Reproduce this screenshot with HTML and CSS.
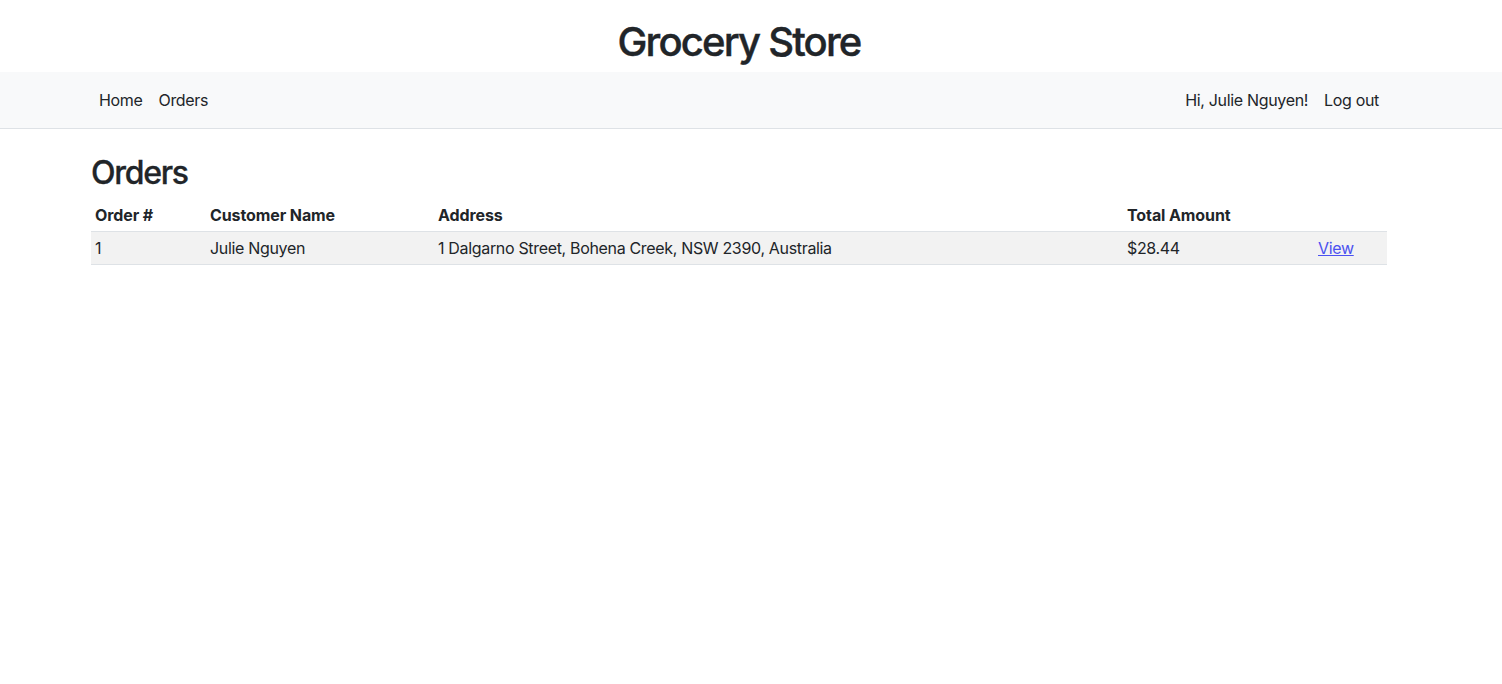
FILE: index.html
```html
<!DOCTYPE html>
<html lang="en">
<head>
<meta charset="utf-8">
<title>Grocery Store</title>
<link rel="stylesheet" href="styles.css">
</head>
<body>
  <header class="container site-header">
    <h1 class="site-title">Grocery Store</h1>
  </header>
  <nav class="navbar">
    <div class="container nav-inner">
      <ul class="nav">
        <li><a class="nav-link" href="#">Home</a></li>
        <li><a class="nav-link" href="#">Orders</a></li>
      </ul>
      <ul class="nav">
        <li><span class="nav-link">Hi, Julie Nguyen!</span></li>
        <li><a class="nav-link" href="#">Log out</a></li>
      </ul>
    </div>
  </nav>
  <main class="container main">
    <h2 class="page-title">Orders</h2>
    <table class="orders">
      <colgroup>
        <col class="c1"><col class="c2"><col class="c3"><col class="c4"><col class="c5">
      </colgroup>
      <thead>
        <tr>
          <th>Order #</th>
          <th>Customer Name</th>
          <th>Address</th>
          <th>Total Amount</th>
          <th></th>
        </tr>
      </thead>
      <tbody>
        <tr>
          <td>1</td>
          <td>Julie Nguyen</td>
          <td>1 Dalgarno Street, Bohena Creek, NSW 2390, Australia</td>
          <td>$28.44</td>
          <td><a class="view-link" href="#">View</a></td>
        </tr>
      </tbody>
    </table>
  </main>
</body>
</html>
```
FILE: styles.css
```css
* { box-sizing: border-box; }
html, body { margin: 0; padding: 0; }
body {
  font-family: Inter, "Noto Sans", "Liberation Sans", sans-serif;
  font-size: 16px;
  line-height: 24px;
  letter-spacing: -0.33px;
  color: #212529;
  background: #fff;
}
.container {
  width: 1296px;
  margin-left: 91px;
}
.site-header {
  padding-top: 18px;
  padding-bottom: 6px;
  text-align: center;
}
.site-title {
  margin: 0;
  font-size: 40px;
  line-height: 48px;
  font-weight: 500;
  letter-spacing: -1.8px;
  -webkit-text-stroke: 0.4px #212529;
}
.navbar {
  background: #f8f9fa;
  border-bottom: 1px solid #dee2e6;
  padding: 8px 0;
}
.nav-inner {
  display: flex;
  justify-content: space-between;
  align-items: center;
}
.nav {
  list-style: none;
  margin: 0;
  padding: 0;
  display: flex;
}
.nav-link {
  display: block;
  padding: 8px;
  color: #212529;
  text-decoration: none;
}
.main { padding-top: 25px; }
.page-title {
  margin: 0 0 7px;
  font-size: 32px;
  line-height: 38px;
  font-weight: 500;
  letter-spacing: -1.3px;
  -webkit-text-stroke: 0.3px #212529;
}
.orders {
  width: 1296px;
  border-collapse: collapse;
  table-layout: fixed;
}
.c1 { width: 115px; }
.c2 { width: 228px; }
.c3 { width: 689px; }
.c4 { width: 191px; }
.c5 { width: 73px; }
.orders th, .orders td {
  padding: 4px;
  text-align: left;
  vertical-align: top;
}
.orders th { font-weight: 700; letter-spacing: -0.1px; }
.orders thead tr { border-bottom: 1px solid #dee2e6; }
.orders tbody tr { background: #f2f2f2; border-bottom: 1px solid #dee2e6; }
.view-link { color: #4b51f0; text-decoration: underline; }
```
